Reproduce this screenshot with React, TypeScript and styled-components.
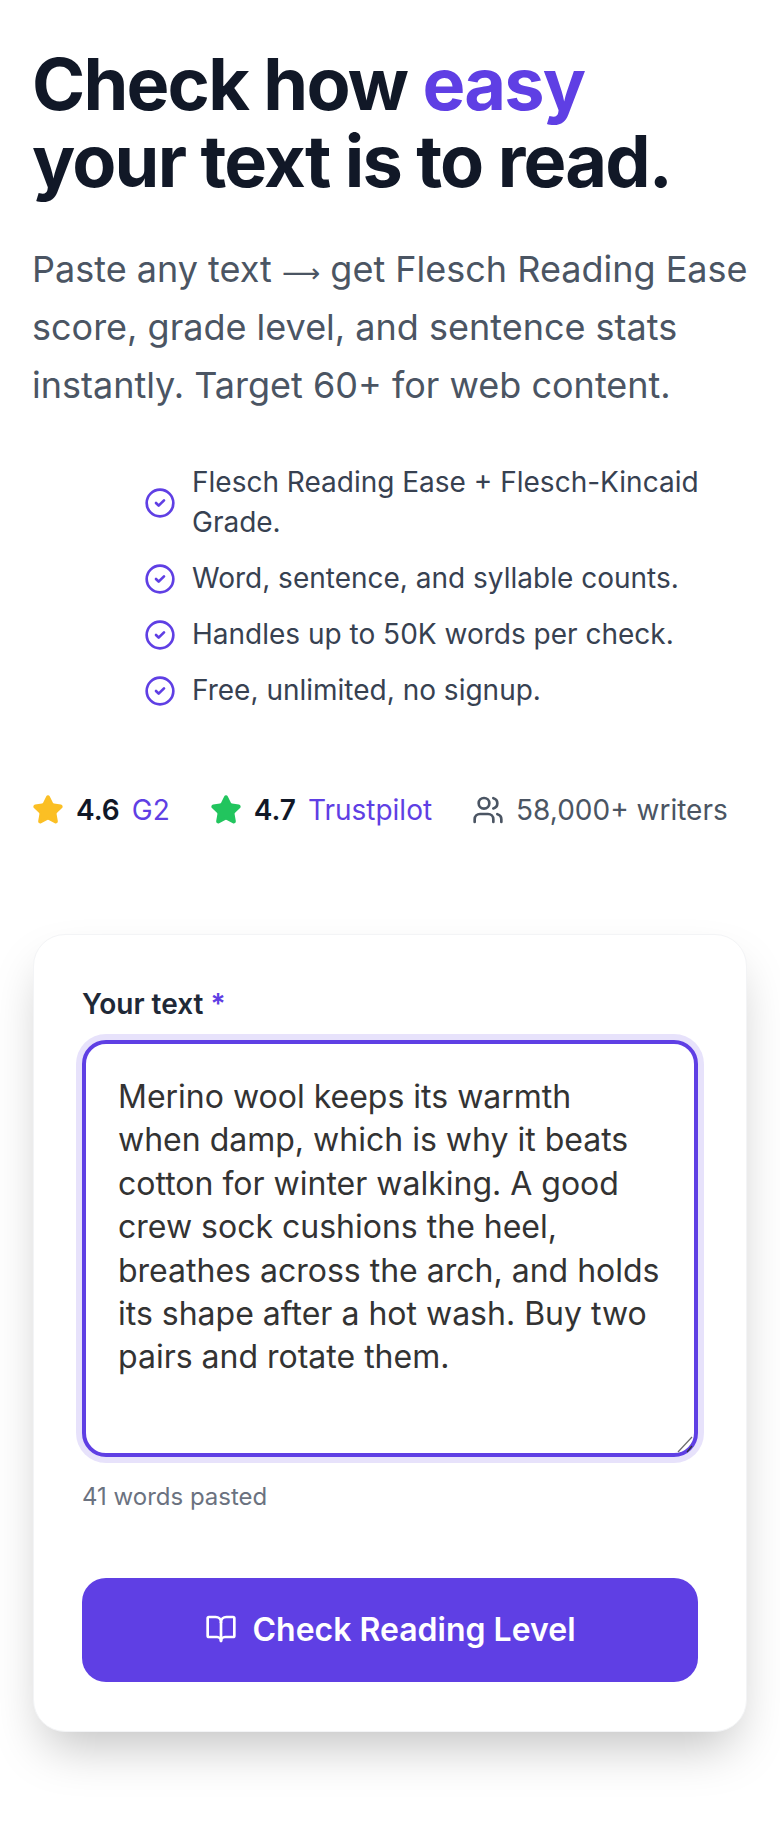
import React from 'react';
import styled, {createGlobalStyle} from 'styled-components';
import {BookOpen, CircleCheck, Star, Users} from 'lucide-react';

const purple = '#5f3fe4';

const GlobalStyle = createGlobalStyle`
  * {
    box-sizing: border-box;
  }
  body {
    margin: 0;
    background: #fff;
    font-family: Inter, sans-serif;
  }
`

const features = [
    'Flesch Reading Ease + Flesch-Kincaid Grade.',
    'Word, sentence, and syllable counts.',
    'Handles up to 50K words per check.',
    'Free, unlimited, no signup.',
];

const sample = 'Merino wool keeps its warmth when damp, which is why it beats cotton for winter walking. A good crew sock cushions the heel, breathes across the arch, and holds its shape after a hot wash. Buy two pairs and rotate them.';

export default function App() {
    return (
        <Page>
            <GlobalStyle/>
            <Title>Check how <Accent>easy</Accent><br/>your text is to read.</Title>
            <Lead>Paste any text <Arrow>⟶</Arrow> get Flesch Reading Ease score, grade level, and sentence stats instantly. Target 60+ for web content.</Lead>

            <Features>
                {features.map(text => (
                    <Feature key={text}>
                        <CircleCheck size={32} strokeWidth={2} color={purple}/>
                        <span>{text}</span>
                    </Feature>
                ))}
            </Features>

            <Ratings>
                <Rating>
                    <Star size={32} fill="#fbbf24" color="#fbbf24"/>
                    <Score>4.6</Score>
                    <Source>G2</Source>
                </Rating>
                <Rating>
                    <Star size={32} fill="#22c55e" color="#22c55e"/>
                    <Score>4.7</Score>
                    <Source>Trustpilot</Source>
                </Rating>
                <Rating>
                    <Users size={32} strokeWidth={2} color="#4b5563"/>
                    <Writers>58,000+ writers</Writers>
                </Rating>
            </Ratings>

            <Card>
                <Label htmlFor="text">Your text <Required>*</Required></Label>
                <Field>
                    <Input id="text" defaultValue={sample}/>
                    <Grip viewBox="0 0 18 18" aria-hidden="true">
                        <line x1="1" y1="16" x2="15" y2="1" stroke="#6b6b6b" strokeWidth="1.2"/>
                        <line x1="10" y1="16" x2="15" y2="10" stroke="#333" strokeWidth="1.2"/>
                    </Grip>
                </Field>
                <Hint>41 words pasted</Hint>
                <Submit type="button">
                    <BookOpen size={32} strokeWidth={2}/>
                    Check Reading Level
                </Submit>
            </Card>
        </Page>
    );
}

const Page = styled.main`
  width: 780px;
  height: 1828px;
  padding: 45px 24px 0 32px;
  overflow: hidden;
`

const Title = styled.h1`
  margin: 0 0 41px;
  font-size: 72px;
  line-height: 77px;
  font-weight: 700;
  letter-spacing: -0.025em;
  color: #111827;
`

const Accent = styled.span`
  color: ${purple};
`

const Lead = styled.p`
  margin: 0 0 48px;
  font-size: 36px;
  line-height: 58px;
  color: #4b5563;
`

const Arrow = styled.span`
  font-family: "DejaVu Sans", sans-serif;
  font-size: 26.7px;
  line-height: 1;
`

const Features = styled.ul`
  margin: 0 0 80px;
  padding: 0 0 0 112px;
  list-style: none;
`

const Feature = styled.li`
  display: flex;
  align-items: center;
  gap: 16px;
  margin-bottom: 16px;
  max-width: 600px;
  font-size: 28px;
  line-height: 40px;
  color: #374151;

  svg {
    flex: none;
    margin-top: 2px;
  }
`

const Ratings = styled.div`
  display: flex;
  align-items: center;
  gap: 40px;
  margin-bottom: 104px;
`

const Rating = styled.div`
  display: flex;
  align-items: center;
  gap: 12px;
  font-size: 28px;
  line-height: 40px;
`

const Score = styled.span`
  font-weight: 600;
  color: #111827;
`

const Source = styled.span`
  color: ${purple};
`

const Writers = styled.span`
  color: #4b5563;
`

const Card = styled.section`
  height: 798px;
  margin: 0 9px 0 1px;
  padding: 49px 48px 0 48px;
  background: #fff;
  border: 1px solid #f3f4f6;
  border-radius: 32px;
  box-shadow: 0 25px 50px -12px rgba(0, 0, 0, 0.25);
`

const Label = styled.label`
  display: block;
  margin-bottom: 16px;
  font-size: 28px;
  line-height: 40px;
  font-weight: 600;
  color: #1f2937;
`

const Required = styled.span`
  color: ${purple};
`

const Field = styled.div`
  position: relative;
`

const Input = styled.textarea`
  display: block;
  width: 100%;
  height: 417px;
  padding: 31px 33px 32px 32px;
  border: 4px solid ${purple};
  border-radius: 24px;
  outline: none;
  resize: none;
  box-shadow: 0 0 0 6px rgba(95, 63, 228, 0.15);
  font-family: Inter, sans-serif;
  font-size: 32px;
  line-height: 43.4px;
  color: #333;
`

const Grip = styled.svg`
  position: absolute;
  right: 3px;
  bottom: 3px;
  width: 18px;
  height: 18px;
`

const Hint = styled.p`
  margin: 24px 0 65px;
  font-size: 24px;
  line-height: 32px;
  color: #6b7280;
`

const Submit = styled.button`
  display: flex;
  align-items: center;
  justify-content: center;
  gap: 16px;
  width: 100%;
  height: 104px;
  padding: 0 0 2px;
  border: 0;
  border-radius: 24px;
  background: ${purple};
  font-family: Inter, sans-serif;
  font-size: 32px;
  font-weight: 600;
  color: #fff;
`
